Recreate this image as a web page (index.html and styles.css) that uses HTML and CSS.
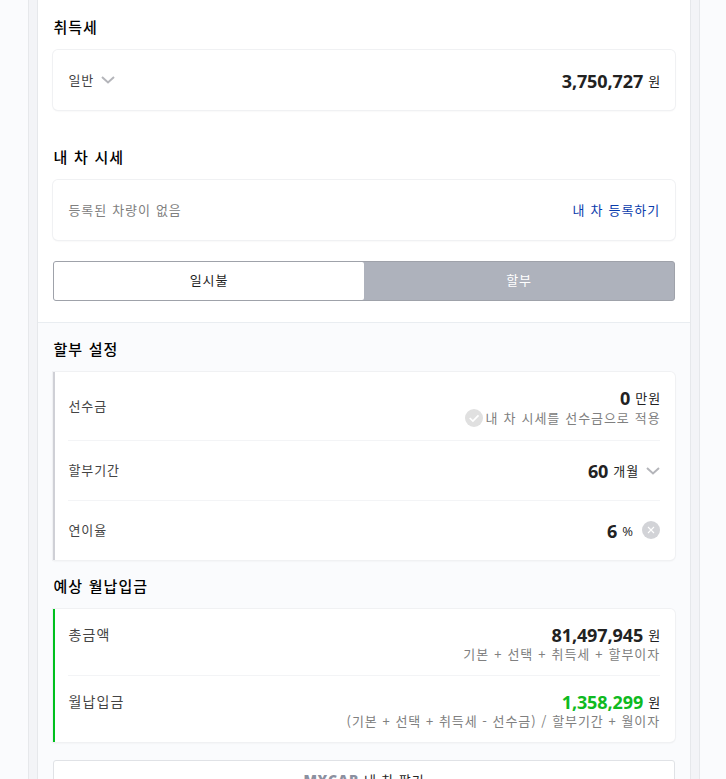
FILE: index.html
```html
<!DOCTYPE html>
<html lang="ko">
<head>
    <meta charset="UTF-8">
    <meta name="viewport" content="width=device-width, initial-scale=1.0">
    <title>내 차 견적</title>
    <link rel="stylesheet" href="styles.css">
</head>
<body>

<div class="frame">
    <div class="page">

        <section class="top">
            <h2>취득세</h2>
            <div class="card single">
                <div class="row">
                    <span class="label select">일반
                        <svg class="arrow" width="14" height="8" viewBox="0 0 14 8"><path d="M1 1l6 5.5L13 1" fill="none" stroke="#b4b5ba" stroke-width="2"/></svg>
                    </span>
                    <span class="price"><strong>3,750,727</strong>원</span>
                </div>
            </div>

            <h2 class="second">내 차 시세</h2>
            <div class="card single">
                <div class="row">
                    <span class="empty">등록된 차량이 없음</span>
                    <a class="link">내 차 등록하기</a>
                </div>
            </div>

            <div class="tabs">
                <button class="tab-btn active">일시불</button>
                <button class="tab-btn">할부</button>
            </div>
        </section>

        <section class="bottom">
            <h2>할부 설정</h2>
            <div class="card setting">
                <div class="row down">
                    <span class="label">선수금</span>
                    <div class="value">
                        <span class="price"><strong>0</strong>만원</span>
                        <span class="note">
                            <svg width="18" height="18" viewBox="0 0 18 18"><circle cx="9" cy="9" r="9" fill="#e0e0e0"/><path d="M4.7 9l3.2 3L13.5 6.3" fill="none" stroke="#fff" stroke-width="1.7"/></svg>
                            내 차 시세를 선수금으로 적용
                        </span>
                    </div>
                </div>
                <div class="row">
                    <span class="label">할부기간</span>
                    <span class="price"><strong>60</strong>개월
                        <svg class="arrow" width="14" height="8" viewBox="0 0 14 8"><path d="M1 1l6 5.5L13 1" fill="none" stroke="#b4b5ba" stroke-width="2"/></svg>
                    </span>
                </div>
                <div class="row">
                    <span class="label">연이율</span>
                    <span class="price rate"><strong>6</strong><small>%</small>
                        <svg class="clear" width="18" height="18" viewBox="0 0 18 18"><circle cx="9" cy="9" r="9" fill="#d2d3d7"/><path d="M6 6l6 6M12 6l-6 6" fill="none" stroke="#fff" stroke-width="1.1"/></svg>
                    </span>
                </div>
            </div>

            <h2 class="result-title">예상 월납입금</h2>
            <div class="card result">
                <div class="row">
                    <span class="label">총금액</span>
                    <div class="value">
                        <span class="price"><strong>81,497,945</strong>원</span>
                        <span class="note">기본 + 선택 + 취득세 + 할부이자</span>
                    </div>
                </div>
                <div class="row">
                    <span class="label">월납입금</span>
                    <div class="value">
                        <span class="price"><strong class="green">1,358,299</strong>원</span>
                        <span class="note formula">(기본 + 선택 + 취득세 - 선수금) / 할부기간 + 월이자</span>
                    </div>
                </div>
            </div>

            <a class="sell"><b>MYCAR</b> 내 차 팔기</a>
        </section>

    </div>
</div>

</body>
</html>
```

FILE: styles.css
```css
* {
    box-sizing: border-box;
}
body {
    margin: 0;
    height: 779px;
    overflow: hidden;
    background: #fafbfd;
    color: #222;
    font-family: "Noto Sans CJK KR", sans-serif;
    font-size: 13px;
    letter-spacing: 0.9px;
}
.frame {
    width: 672px;
    margin: 0 26px 0 28px;
    padding: 0 8px;
    background: #f3f4f7;
    border: solid #e6e8eb;
    border-width: 0 1px;
}
.page {
    background: #fff;
    border: solid #e6e8eb;
    border-width: 0 1px;
}
h2 {
    margin: 0;
    height: 22px;
    padding-left: 0.5px;
    line-height: 20px;
    color: #000;
    font-size: 15px;
    font-weight: 500;
    letter-spacing: 1px;
    word-spacing: 0.5px;
}
.top {
    height: 322px;
    padding: 17px 15px 0;
}
.bottom {
    height: 480px;
    padding: 16px 15px 0;
    background: #fafbfd;
    border-top: 1px solid #e9edf1;
}
.second {
    margin-top: 37px;
}
.result-title {
    margin-top: 16px;
}
.card {
    margin-top: 11px;
    padding: 0 15px;
    background: #fff;
    border-radius: 5px;
    box-shadow: 0 0 0 1px #f0f1f3, 0 1px 2px rgba(0, 0, 0, 0.08);
}
.row {
    display: flex;
    align-items: center;
    justify-content: space-between;
    height: 60px;
    line-height: 20px;
}
.row + .row {
    border-top: 1px solid #f3f4f6;
}
.single .price {
    padding-top: 1px;
}
.label {
    padding-left: 0.5px;
    color: #444;
}
.setting .label {
    padding-bottom: 1px;
}
.arrow {
    margin-left: 7px;
}
.empty {
    padding-left: 0.5px;
    color: #808080;
    word-spacing: 0.6px;
}
.link {
    color: #0a3cac;
    word-spacing: 0.6px;
}
.price {
    display: flex;
    align-items: center;
    height: 20px;
    margin-right: -1px;
}
.price strong {
    margin-right: 5px;
    font-family: "Open Sans", sans-serif;
    font-size: 18px;
    font-weight: 700;
    letter-spacing: -0.1px;
}
.green {
    color: #0fba21;
}
.select {
    display: flex;
    align-items: center;
}
.price .arrow {
    margin-left: 7px;
    margin-right: 1px;
}
.price small {
    font-family: "Open Sans", sans-serif;
    font-size: 13px;
    letter-spacing: 0;
}
.price .clear {
    margin-left: 9px;
    margin-right: 1px;
    margin-bottom: 2px;
}
.value {
    display: flex;
    flex-direction: column;
    align-items: flex-end;
}
.note {
    display: flex;
    align-items: center;
    gap: 4px;
    color: #808080;
    word-spacing: 0.6px;
}
.down .note {
    gap: 3px;
    margin-right: -0.5px;
}
.formula {
    word-spacing: 0.3px;
}

/* 일시불 / 할부 */
.tabs {
    display: flex;
    height: 40px;
    margin-top: 21px;
    background: #aeb2bc;
    border: 1px solid #9fa2aa;
    border-radius: 3px;
}
.tab-btn {
    flex: 1;
    padding: 0 0 3px;
    border: none;
    border-radius: 2px;
    background: none;
    color: #fff;
    font: inherit;
    letter-spacing: inherit;
}
.tab-btn.active {
    background: #fff;
    color: #222;
}

.setting,
.result {
    padding-left: 13px;
    border-left: 2px solid #cfd0d6;
    border-radius: 0 5px 5px 0;
}
.setting .down {
    height: 68px;
}
.down .value {
    margin-top: 3px;
}
.result {
    border-left-color: #00c01e;
}
.result .row {
    height: 66px;
    align-items: flex-start;
    padding-top: 16px;
}
.result .row + .row {
    height: 67px;
}
.result .label {
    margin-top: -1px;
    font-size: 14px;
    letter-spacing: 1.1px;
}
.result .note {
    line-height: 17px;
}
.sell {
    display: block;
    height: 42px;
    margin-top: 18px;
    background: #fff;
    border: 1px solid #e0e2e6;
    border-radius: 3px;
    text-align: center;
    line-height: 38px;
}
.sell b {
    color: #8b90a0;
    font-family: "Open Sans", sans-serif;
    font-size: 14px;
    font-weight: 800;
    letter-spacing: 0.9px;
}
```
